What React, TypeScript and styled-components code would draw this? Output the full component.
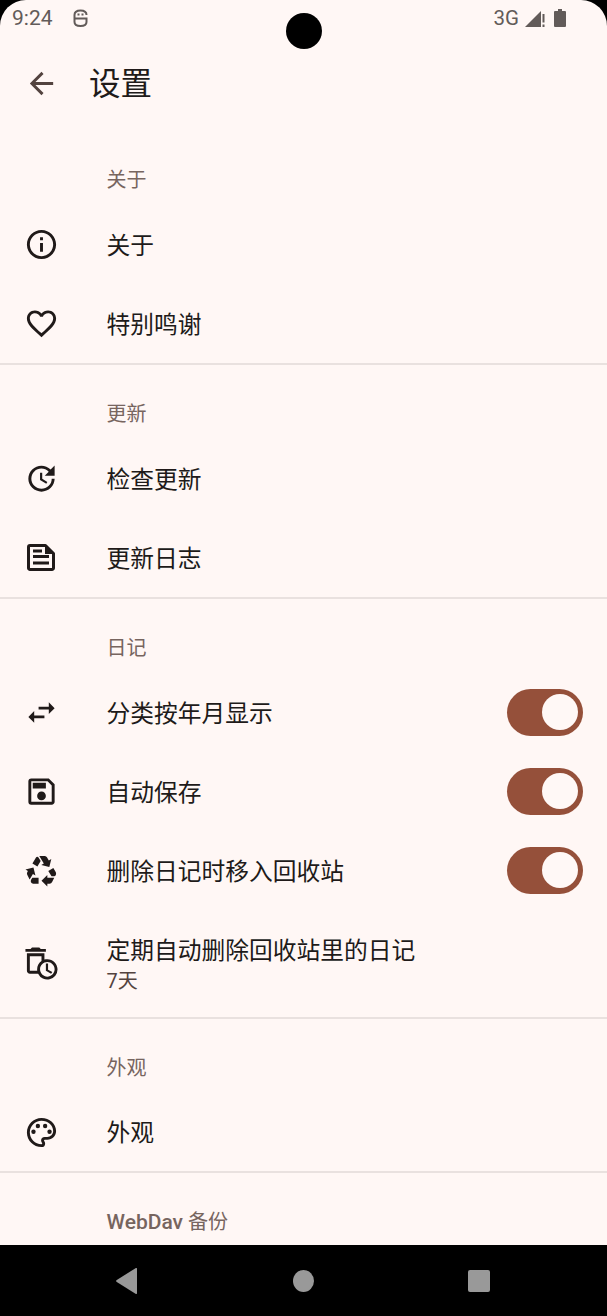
import React from "react";
import styled, { createGlobalStyle } from "styled-components";
import {
  MdArrowBack,
  MdOutlineInfo,
  MdFavoriteBorder,
  MdUpdate,
  MdSwapHoriz,
  MdOutlineSave,
  MdRecycling,
  MdOutlineAutoDelete,
  MdOutlinePalette,
} from "react-icons/md";

const Global = createGlobalStyle`
  html, body { margin: 0; padding: 0; background: #000; }
  * { box-sizing: border-box; }
`;

const FONT = `"Roboto", "Noto Sans CJK SC", sans-serif`;

const Phone = styled.div`
  position: relative;
  width: 607px;
  height: 1316px;
  background: #000;
  display: flex;
  flex-direction: column;
  overflow: hidden;
  font-family: ${FONT};
`;

const Screen = styled.div`
  flex: 1;
  min-height: 0;
  background: #fff7f5;
  border-radius: 26px 26px 0 0;
  overflow: hidden;
  display: flex;
  flex-direction: column;
`;

const Camera = styled.div`
  position: absolute;
  left: 285.5px;
  top: 12.500px;
  width: 36px;
  height: 36px;
  border-radius: 50%;
  background: #000;
`;

const StatusBar = styled.div`
  height: 36px;
  flex: none;
  display: flex;
  align-items: center;
  padding: 0 41px 0 12px;
  color: #625b59;
`;

const Time = styled.span`
  font-size: 21px;
  line-height: 36px;
  margin-right: 20px;
`;

const Spacer = styled.div`
  flex: 1;
`;

const Network = styled.span`
  font-size: 20.5px;
  line-height: 36px;
  margin-right: 6px;
`;

const StatusIcon = styled.svg<{ $gap?: number }>`
  display: block;
  flex: none;
  margin-right: ${(p) => p.$gap ?? 0}px;
`;

const AppBar = styled.div`
  height: 95px;
  flex: none;
  display: flex;
  align-items: center;
  padding-left: 24px;
  color: #201a19;
`;

const BackIcon = styled(MdArrowBack)`
  width: 35px;
  height: 35px;
  color: #53433f;
  flex: none;
`;

const Title = styled.h1`
  margin: 2px 0 0 30px;
  font-size: 31.5px;
  font-weight: 400;
  line-height: 40px;
`;

const List = styled.div`
  flex: 1;
  min-height: 0;
  overflow: hidden;
`;

const Section = styled.section<{ $last?: boolean }>`
  border-bottom: ${(p) => (p.$last ? "none" : "2px solid #e9e1df")};
`;

const SectionTitle = styled.div`
  height: 74px;
  padding: 37px 0 0 106.5px;
  font-size: 20px;
  line-height: 24px;
  font-weight: 400;
  color: #77655f;
`;

const Latin = styled.span`
  font-size: 21px;
  font-weight: 500;
`;

const Row = styled.div<{ $size?: "tall" | "short" }>`
  height: ${(p) => (p.$size === "tall" ? "107px" : p.$size === "short" ? "78px" : "79px")};
  display: flex;
  align-items: center;
  padding: 0 24px;
`;

const IconSlot = styled.div`
  width: 35px;
  height: 35px;
  flex: none;
  margin-right: 47.5px;
  color: #201a19;
  display: flex;
  align-items: center;
  justify-content: center;
  svg {
    width: 35px;
    height: 35px;
    display: block;
  }
`;

const TextCol = styled.div`
  flex: 1;
  min-width: 0;
  padding-top: 2px;
`;

const RowTitle = styled.div`
  font-size: 23.75px;
  line-height: 32px;
  color: #201a19;
`;

const RowSub = styled.div`
  font-size: 20px;
  line-height: 28px;
  color: #53433f;
`;

const Toggle = styled.div`
  width: 76px;
  height: 47px;
  flex: none;
  margin-bottom: 1px;
  border-radius: 24px;
  background: #95503a;
  display: flex;
  align-items: center;
  justify-content: flex-end;
  padding-right: 5px;
`;

const Thumb = styled.div`
  width: 36px;
  height: 36px;
  border-radius: 50%;
  background: #fff8f6;
`;

const NavBar = styled.div`
  height: 71px;
  flex: none;
  background: #000;
  display: grid;
  grid-template-columns: 253.5px 100px 1fr;
  align-items: center;
`;

const NavCell = styled.div`
  display: flex;
  align-items: center;
`;

const BackKey = styled(NavCell)`
  padding-left: 116px;
`;

const HomeKey = styled(NavCell)`
  padding-left: 39.5px;
`;

const RecentKey = styled(NavCell)`
  padding-left: 114.5px;
`;

const Triangle = styled.svg`
  display: block;
`;

const HomeDot = styled.div`
  width: 21px;
  height: 22px;
  border-radius: 50%;
  background: #999;
`;

const RecentSquare = styled.div`
  width: 22px;
  height: 22px;
  border-radius: 2px;
  background: #999;
`;

const NoteIcon = () => (
  <svg viewBox="0 0 35 35" fill="none">
    <path
      d="M6 5.500h15.500l8 8V28a1.500 1.500 0 0 1-1.500 1.500H6A1.500 1.500 0 0 1 4.500 28V7A1.500 1.500 0 0 1 6 5.500Z"
      stroke="currentColor"
      strokeWidth="3"
      strokeLinejoin="round"
    />
    <path d="M21 5.500l8.500 8.500H21z" fill="currentColor" />
    <path d="M9 11h9M9 16.500h16M9 23h16" stroke="currentColor" strokeWidth="3" />
  </svg>
);

const ItemRow = ({
  icon,
  title,
  sub,
  toggle,
  size,
}: {
  icon: React.ReactNode;
  title: string;
  sub?: string;
  toggle?: boolean;
  size?: "tall" | "short";
}) => (
  <Row $size={size}>
    <IconSlot>{icon}</IconSlot>
    <TextCol>
      <RowTitle>{title}</RowTitle>
      {sub && <RowSub>{sub}</RowSub>}
    </TextCol>
    {toggle && (
      <Toggle>
        <Thumb />
      </Toggle>
    )}
  </Row>
);

export default function App() {
  return (
    <>
      <Global />
      <Phone>
        <Screen>
          <StatusBar>
            <Time>9:24</Time>
            <StatusIcon width="15" height="18" viewBox="0 0 15 18" fill="none">
              <path
                d="M1.500 9V6C1.500 3 4 1.500 7.500 1.500S13.500 3 13.500 6M0.500 9.500H14.500M1.500 10V13C1.500 16 4 17 7.500 17S13.500 16 13.500 13V10"
                stroke="#625b59"
                strokeWidth="2"
              />
              <rect x="4.500" y="4.500" width="2" height="2" fill="#625b59" />
              <rect x="8.500" y="4.500" width="2" height="2" fill="#625b59" />
            </StatusIcon>
            <Spacer />
            <Network>3G</Network>
            <StatusIcon width="20" height="18" viewBox="0 0 20 18" $gap={9}>
              <path d="M0 18 16 2v16z" fill="#625b59" />
              <rect x="17.500" y="5" width="2" height="8.500" fill="#625b59" />
              <rect x="17.500" y="15.500" width="2" height="2.500" fill="#625b59" />
            </StatusIcon>
            <StatusIcon width="12" height="18" viewBox="0 0 12 18">
              <path d="M4 0h4v2h3a1 1 0 0 1 1 1v14a1 1 0 0 1-1 1H1a1 1 0 0 1-1-1V3a1 1 0 0 1 1-1h3z" fill="#625b59" />
            </StatusIcon>
          </StatusBar>
          <AppBar>
            <BackIcon />
            <Title>设置</Title>
          </AppBar>
          <List>
            <Section>
              <SectionTitle>关于</SectionTitle>
              <ItemRow icon={<MdOutlineInfo />} title="关于" />
              <ItemRow icon={<MdFavoriteBorder />} title="特别鸣谢" />
            </Section>
            <Section>
              <SectionTitle>更新</SectionTitle>
              <ItemRow icon={<MdUpdate />} title="检查更新" />
              <ItemRow icon={<NoteIcon />} title="更新日志" />
            </Section>
            <Section>
              <SectionTitle>日记</SectionTitle>
              <ItemRow icon={<MdSwapHoriz />} title="分类按年月显示" toggle />
              <ItemRow icon={<MdOutlineSave />} title="自动保存" toggle />
              <ItemRow icon={<MdRecycling />} title="删除日记时移入回收站" toggle />
              <ItemRow icon={<MdOutlineAutoDelete />} title="定期自动删除回收站里的日记" sub="7天" size="tall" />
            </Section>
            <Section>
              <SectionTitle>外观</SectionTitle>
              <ItemRow icon={<MdOutlinePalette />} title="外观" size="short" />
            </Section>
            <Section $last>
              <SectionTitle>
                <Latin>WebDav</Latin> 备份
              </SectionTitle>
            </Section>
          </List>
        </Screen>
        <NavBar>
          <BackKey>
            <Triangle width="21" height="26" viewBox="0 0 21 26">
              <path d="M21 1v24a1 1 0 0 1-1.500.800L.800 14a1.200 1.200 0 0 1 0-2L19.500.200A1 1 0 0 1 21 1z" fill="#999" />
            </Triangle>
          </BackKey>
          <HomeKey>
            <HomeDot />
          </HomeKey>
          <RecentKey>
            <RecentSquare />
          </RecentKey>
        </NavBar>
        <Camera />
      </Phone>
    </>
  );
}
